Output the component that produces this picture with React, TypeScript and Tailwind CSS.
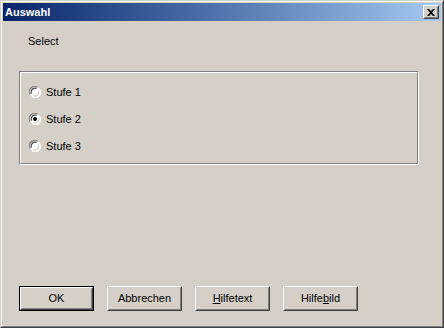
import React from 'react';

const options = ['Stufe 1', 'Stufe 2', 'Stufe 3'];

function Radio({ checked }: { checked: boolean }) {
  return (
    <svg width="12" height="12" viewBox="0 0 12 12" className="shrink-0">
      <circle cx="6" cy="6" r="5.5" fill="#ffffff" />
      <path d="M1.2 8.5 A5.3 5.3 0 0 1 8.5 1.2" stroke="#808080" strokeWidth="1.2" fill="none" />
      <path d="M2.4 7.6 A4 4 0 0 1 7.6 2.4" stroke="#404040" strokeWidth="1.2" fill="none" />
      <path d="M10.8 3.5 A5.3 5.3 0 0 1 3.5 10.8" stroke="#ffffff" strokeWidth="1.2" fill="none" />
      <path d="M9.6 4.4 A4 4 0 0 1 4.4 9.6" stroke="#d4d0c8" strokeWidth="1.2" fill="none" />
      {checked && <circle cx="6" cy="6" r="2" fill="#000000" />}
    </svg>
  );
}

function Button({ children, isDefault }: { children: React.ReactNode; isDefault?: boolean }) {
  const inner = (
    <div className="h-full border border-t-white border-l-white border-r-[#404040] border-b-[#404040]">
      <div className="h-full flex items-center justify-center border border-t-[#d4d0c8] border-l-[#d4d0c8] border-r-[#808080] border-b-[#808080] text-[11px] text-black">
        {children}
      </div>
    </div>
  );
  return (
    <div className={`w-[75px] h-[25px] ${isDefault ? 'border border-black' : ''}`}>
      {inner}
    </div>
  );
}

export default function App() {
  return (
    <div
      className="w-[444px] h-[328px] bg-[#d4d0c8] border border-t-[#d4d0c8] border-l-[#d4d0c8] border-r-[#404040] border-b-[#404040]"
      style={{ fontFamily: '"Liberation Sans", Arial, sans-serif' }}
    >
      <div className="h-full border border-t-white border-l-white border-r-[#808080] border-b-[#808080] p-px flex flex-col">
        {/* Title bar */}
        <div className="h-[18px] shrink-0 flex items-center justify-between pl-[2px] pr-[2px] bg-gradient-to-r from-[#0a246a] to-[#a6caf0]">
          <span className="text-white font-bold text-[11px] leading-none">Auswahl</span>
          <div className="w-[16px] h-[14px] border border-t-white border-l-white border-r-[#404040] border-b-[#404040] bg-[#d4d0c8]">
            <div className="h-full flex items-center justify-center border border-t-[#d4d0c8] border-l-[#d4d0c8] border-r-[#808080] border-b-[#808080]">
              <svg width="8" height="7" viewBox="0 0 8 7">
                <path d="M0 0h2l2 2 2-2h2L5 3.5 8 7H6L4 5 2 7H0l3-3.5z" fill="#000" />
              </svg>
            </div>
          </div>
        </div>

        {/* Body */}
        <div className="flex-1 flex flex-col pl-[16px]">
          <div className="mt-[14px] pl-[9px] text-[11px] leading-[13px] text-black">Select</div>

          <div className="mt-[23px] w-[400px] h-[94px] border border-t-[#808080] border-l-[#808080] border-r-white border-b-white">
            <div className="h-full border border-t-white border-l-white border-r-[#808080] border-b-[#808080] flex flex-col pt-[13px] pl-[8px] gap-[15px]">
              {options.map((label, i) => (
                <div key={label} className="flex items-center gap-[5px] h-[12px]">
                  <Radio checked={i === 1} />
                  <span className="text-[11px] leading-[13px] text-black">{label}</span>
                </div>
              ))}
            </div>
          </div>

          <div className="mt-auto mb-[14px] flex gap-[13px]">
            <Button isDefault>OK</Button>
            <Button>Abbrechen</Button>
            <Button>
              <span className="underline">H</span>ilfetext
            </Button>
            <Button>
              Hilfe<span className="underline">b</span>ild
            </Button>
          </div>
        </div>
      </div>
    </div>
  );
}
